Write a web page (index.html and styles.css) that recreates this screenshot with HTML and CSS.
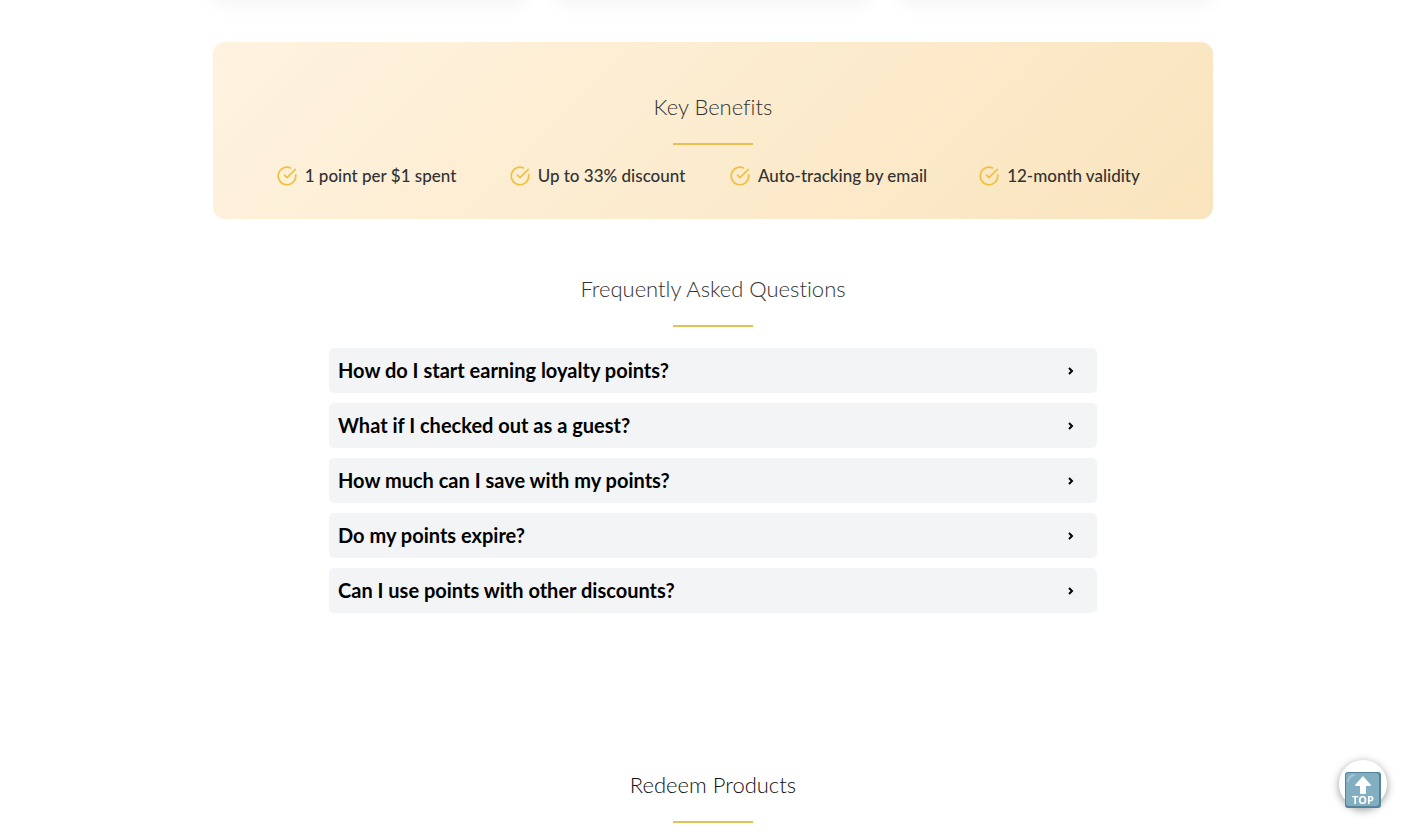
FILE: index.html
```html
<!DOCTYPE html>
<html lang="en">
<head>
	<meta charset="utf-8">
	<meta name="viewport" content="width=device-width, initial-scale=1">
	<title>Loyalty Points</title>
	<link rel="stylesheet" href="styles.css">
</head>
<body>

<svg class="sprite" aria-hidden="true">
	<symbol id="check" viewBox="0 0 24 24">
		<path d="M22.500 10.500V12a10.500 10.500 0 1 1-6.200-9.600"/>
		<path d="M22 4L12 14l-3-3"/>
	</symbol>
	<symbol id="chevron" viewBox="0 0 6 8">
		<path d="M1 1l3 3-3 3"/>
	</symbol>
</svg>

<main class="page">
	<div class="cards">
		<div class="card"></div>
		<div class="card"></div>
		<div class="card"></div>
	</div>

	<section class="benefits">
		<h2>Key Benefits</h2>
		<ul class="benefit-list">
			<li><svg class="check"><use href="#check"/></svg><span>1 point per $1 spent</span></li>
			<li><svg class="check"><use href="#check"/></svg><span>Up to 33% discount</span></li>
			<li><svg class="check"><use href="#check"/></svg><span>Auto-tracking by email</span></li>
			<li><svg class="check"><use href="#check"/></svg><span>12-month validity</span></li>
		</ul>
	</section>

	<section class="faq">
		<h2>Frequently Asked Questions</h2>
		<div class="faq-list">
			<button type="button" class="question">How do I start earning loyalty points?<svg class="chevron"><use href="#chevron"/></svg></button>
			<button type="button" class="question">What if I checked out as a guest?<svg class="chevron"><use href="#chevron"/></svg></button>
			<button type="button" class="question">How much can I save with my points?<svg class="chevron"><use href="#chevron"/></svg></button>
			<button type="button" class="question">Do my points expire?<svg class="chevron"><use href="#chevron"/></svg></button>
			<button type="button" class="question">Can I use points with other discounts?<svg class="chevron"><use href="#chevron"/></svg></button>
		</div>
	</section>

	<section class="redeem">
		<h2>Redeem Products</h2>
	</section>
</main>

<button type="button" class="top" aria-label="Back to top">
	<svg viewBox="0 0 36 36">
		<rect width="36" height="36" rx="3" fill="#558498"/>
		<rect x="1" y="1" width="33" height="33" rx="3" fill="#82aec2"/>
		<path d="M3 9Q4 4 9 3" fill="none" stroke="#a5c6d4" stroke-width="2" stroke-linecap="round"/>
		<path d="M18 4l8 9q0 1-1 1h-4v7q0 1-1 1h-4q-1 0-1-1v-7h-4q-1 0-1-1z" fill="#fff"/>
		<text x="18" y="32" text-anchor="middle">TOP</text>
	</svg>
</button>

</body>
</html>
```

FILE: styles.css
```css
* {
  box-sizing: border-box;
}

body {
  margin: 0;
  font-family: Lato, "Open Sans", sans-serif;
  font-variant-ligatures: none;
  background-color: #fff;
  color: #333;
  overflow-x: hidden;
}

.sprite {
  display: none;
}

.page {
  max-width: 1003px;
  margin: 0 auto;
  padding-left: 3px;
}

/* Product cards above the benefits */
.cards {
  display: grid;
  grid-template-columns: repeat(3, 1fr);
  gap: 30px;
  margin-bottom: 42px;
}

.card {
  height: 40px;
  margin-top: -40px;
  border-radius: 12px;
  box-shadow: 0 4px 20px rgba(0,0,0,0.05);
}

/* Section headings with the gold line under them */
h2 {
  margin: 0;
  font-size: 22px;
  font-weight: 300;
  line-height: 30px;
  text-align: center;
}

h2::after {
  content: "";
  display: block;
  width: 80px;
  height: 2px;
  margin: 21px auto 0;
  background-color: #e8bf50;
}

.benefits {
  padding: 50px 38px 31px;
  border-radius: 12px;
  background: linear-gradient(135deg, #fff3e0, #f9e4bd);
}

.benefit-list {
  display: grid;
  grid-template-columns: repeat(4, 1fr);
  margin: 0;
  padding: 19px 0 0;
  list-style: none;
}

.benefit-list li {
  display: flex;
  justify-content: center;
  align-items: center;
  gap: 8px;
  font-size: 17px;
  font-weight: 500;
  line-height: 24px;
}

.check {
  width: 20px;
  height: 20px;
  flex: none;
  fill: none;
  stroke: #f0c040;
  stroke-width: 2;
  stroke-linecap: round;
  stroke-linejoin: round;
}

.faq {
  max-width: 768px;
  margin: 0 auto;
  padding-top: 55px;
}

.faq-list {
  display: flex;
  flex-direction: column;
  gap: 10px;
  padding-top: 21px;
}

.question {
  display: flex;
  justify-content: space-between;
  align-items: center;
  width: 100%;
  padding: 10px 23px 10px 9px;
  border: none;
  border-radius: 5px;
  background-color: #f3f4f6;
  color: #000;
  font-family: inherit;
  font-size: 20px;
  font-weight: 700;
  line-height: 25px;
  text-align: left;
  cursor: pointer;
}

.chevron {
  width: 6px;
  height: 8px;
  fill: none;
  stroke: #000;
  stroke-width: 2;
}

.redeem {
  padding: 157px 0 16px;
  color: #111;
}

/* Back to top button */
.top {
  position: fixed;
  right: 36px;
  bottom: 32px;
  width: 48px;
  height: 48px;
  padding: 11px 0 0 6px;
  border: none;
  border-radius: 50%;
  background-color: #fff;
  box-shadow: 0 2px 8px rgba(0,0,0,0.4);
  cursor: pointer;
}

.top svg {
  display: block;
  width: 36px;
  height: 36px;
}

.top text {
  fill: #fff;
  font-family: "Open Sans", sans-serif;
  font-size: 11px;
  font-weight: 700;
}
```
